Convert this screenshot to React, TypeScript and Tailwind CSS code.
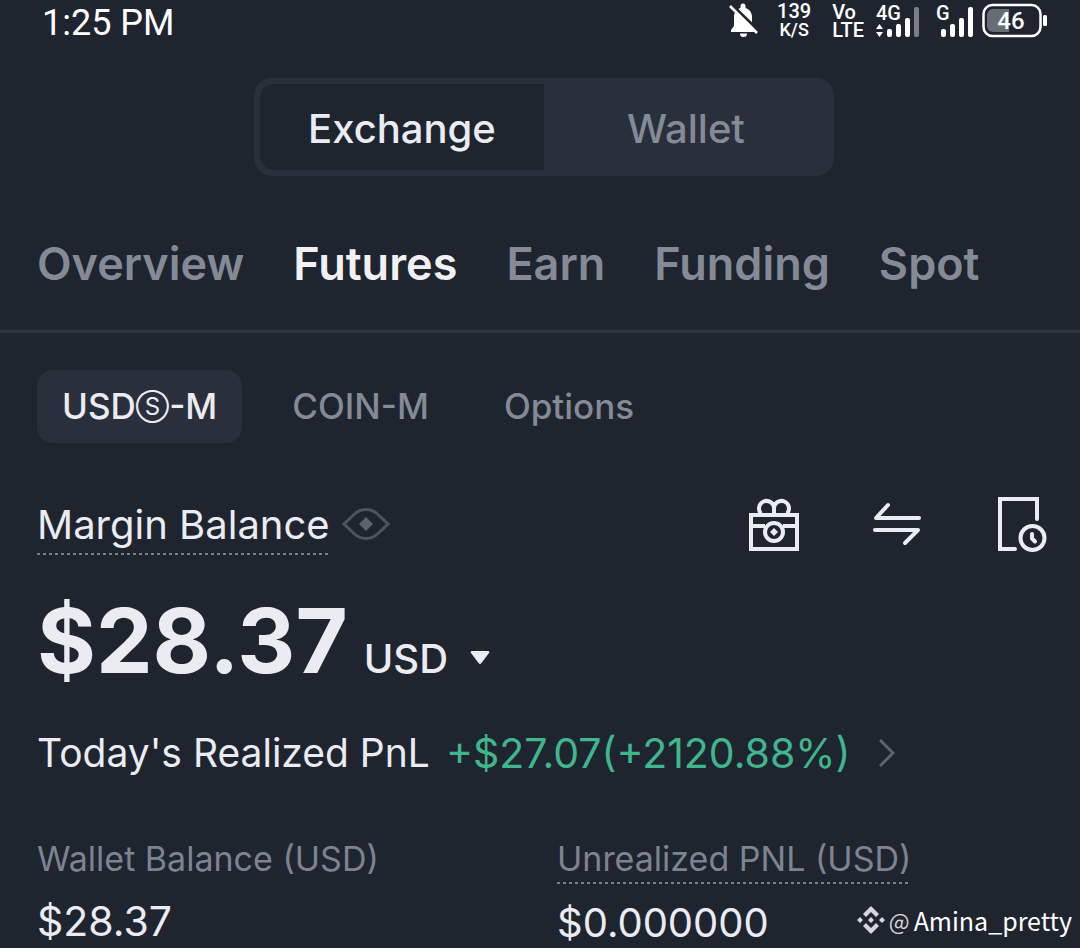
import { useState } from 'react';

const accountTabs = ['Overview', 'Futures', 'Earn', 'Funding', 'Spot'] as const;
const marketTabs = ['USDⓈ-M', 'COIN-M', 'Options'] as const;

const dottedUnderline = 'bg-[linear-gradient(90deg,#7a808b_50%,transparent_50%)] bg-[length:6px_2px] bg-bottom-left bg-repeat-x';

function StatusBar() {
  return (
    <header className="flex h-11 items-start justify-between pr-8 pl-[42px] font-['Roboto',sans-serif] text-white">
      <time className="text-[36px] leading-[46px]">1:25 PM</time>
      <div className="flex items-start font-medium">
        <svg className="mt-[2px] h-9 w-8" viewBox="0 0 32 36" fill="none">
          <path d="M3 30h24v-2l-3-4V15c0-5-3-8-6.500-9V4a2.500 2.500 0 0 0-5 0v2C9 7 6 10 6 15v9l-3 4z" fill="white" />
          <path d="M12 31.500h7a3.500 3.500 0 0 1-7 0z" fill="white" />
          <path d="M3 2l28 27" stroke="#1f252f" strokeWidth="3" />
          <path d="M2 4l27 27" stroke="white" strokeWidth="2.500" />
        </svg>
        <div className="ml-4 w-9 text-center text-[20px] leading-[22px]">
          <div>139</div>
          <div className="text-[18px] leading-4">K/S</div>
        </div>
        <div className="ml-5 pt-[3px] text-[20px] leading-[18px]">
          <div>Vo</div>
          <div>LTE</div>
        </div>
        <svg className="ml-3 h-[38px] w-11" viewBox="0 0 44 38" fill="white">
          <text x="0" y="20" fontSize="20">4G</text>
          <path d="M0 29l3.500-5 3.500 5zM0 32h7l-3.500 5z" />
          <rect x="11" y="29" width="5" height="8" rx="2" />
          <rect x="20" y="24" width="5" height="13" rx="2" />
          <rect x="29" y="18" width="5" height="19" rx="2" />
          <rect x="38" y="7" width="5" height="30" rx="2" fill="#7b7f88" />
        </svg>
        <svg className="ml-4 h-[38px] w-10" viewBox="0 0 40 38" fill="white">
          <text x="0" y="20" fontSize="20">G</text>
          <rect x="5" y="29" width="5" height="8" rx="2" />
          <rect x="14" y="24" width="5" height="13" rx="2" />
          <rect x="23" y="18" width="5" height="19" rx="2" />
          <rect x="32" y="7" width="5" height="30" rx="2" />
        </svg>
        <svg className="ml-[6px] h-[38px] w-[66px]" viewBox="0 0 66 38" fill="none">
          <rect x="1.500" y="5" width="57" height="31" rx="9" stroke="white" strokeWidth="2.500" />
          <path d="M11 9h16v23H11a6 6 0 0 1-6-6V15a6 6 0 0 1 6-6z" fill="#676d77" />
          <rect x="61" y="15" width="4" height="11" rx="1.500" fill="white" />
          <text x="29" y="29" fontSize="24" fill="white" textAnchor="middle">46</text>
        </svg>
      </div>
    </header>
  );
}

function EyeIcon() {
  return (
    <svg className="h-8 w-12" viewBox="0 0 48 32" fill="none">
      <path d="M2 16L12 6.500C15.500 3 19.500 1.500 24 1.500S32.500 3 36 6.500L46 16 36 25.500C32.500 29 28.500 30.500 24 30.500S15.500 29 12 25.500z" stroke="#4d545f" strokeWidth="3" />
      <path d="M24 9l7 7-7 7-7-7z" fill="#5b626d" />
    </svg>
  );
}

function GiftIcon() {
  return (
    <svg className="h-14 w-14" viewBox="0 0 56 56" fill="none" stroke="#eaecf2" strokeWidth="4">
      <path d="M4 18h46v34H4zM4 29h14M36 29h14" />
      <path d="M27 18V11a7.500 7.500 0 1 0-13 5.500M27 18V11a7.500 7.500 0 1 1 13 5.500" />
      <circle cx="27" cy="35" r="9" />
      <path d="M27 31l4 4-4 4-4-4z" fill="#eaecf2" stroke="none" />
    </svg>
  );
}

function TransferIcon() {
  return (
    <svg className="h-14 w-14" viewBox="0 0 56 56" fill="none" stroke="#eaecf2" strokeWidth="4" strokeLinecap="round" strokeLinejoin="round">
      <path d="M48 21H5L17 8" />
      <path d="M4 33h43L34 46" />
    </svg>
  );
}

function HistoryIcon() {
  return (
    <svg className="h-14 w-14" viewBox="0 0 56 56" fill="none" stroke="#eaecf2" strokeWidth="4" strokeLinecap="round">
      <path d="M20 52H5V2h37V22" />
      <circle cx="37.500" cy="41" r="12" />
      <path d="M37 37v4.500l3 3" strokeLinejoin="round" />
    </svg>
  );
}

function BinanceLogo() {
  return (
    <svg className="h-7 w-7" viewBox="0 0 28 28" fill="#d5d7dc">
      <path d="M14 0l8 8-3 3-5-5-5 5-3-3zM14 28l8-8-3-3-5 5-5-5-3 3zM3 11l3 3-3 3-3-3zM25 11l3 3-3 3-3-3zM14 11l3 3-3 3-3-3z" />
    </svg>
  );
}

export default function App() {
  const [view, setView] = useState('Exchange');
  const [account, setAccount] = useState<string>('Futures');
  const [market, setMarket] = useState<string>('USDⓈ-M');

  return (
    <div className="relative min-h-screen overflow-hidden bg-[#1f252f] font-['Inter','Noto_Sans_CJK_SC',sans-serif] text-[#eaecf2]">
      <StatusBar />

      <div className="mt-[34px] flex justify-center pl-2">
        <div className="flex h-[98px] w-[580px] max-w-full rounded-[18px] bg-[#2a303b] p-[6px] text-[40px] font-medium">
          {['Exchange', 'Wallet'].map((item) => (
            <button
              key={item}
              onClick={() => setView(item)}
              className={`flex-1 pt-1 first:rounded-l-[14px] last:rounded-r-[14px] ${view === item ? 'bg-[#1f252f]' : 'text-[#848a96]'}`}
            >
              {item}
            </button>
          ))}
        </div>
      </div>

      <nav className="mt-[58px] flex gap-[49px] border-b-[3px] border-[#2f3541] px-[37px] pb-9 text-[45px] leading-[60px] font-semibold">
        {accountTabs.map((item) => (
          <button key={item} onClick={() => setAccount(item)} className={account === item ? 'text-[#f0f1f5]' : 'text-[#848a96]'}>
            {item}
          </button>
        ))}
      </nav>

      <main className="px-[37px]">
        <div className="mt-[37px] flex gap-[25px] text-[35px] font-medium">
          {marketTabs.map((item) => (
            <button
              key={item}
              onClick={() => setMarket(item)}
              className={`flex h-[73px] items-center rounded-[16px] px-[25px] ${market === item ? 'bg-[#2a303b]' : 'text-[#848a96]'}`}
            >
              {item.split('Ⓢ').map((part, i) => (
                <span key={part} className="flex items-center">
                  {i > 0 && <span className="text-[24px] leading-none font-normal">Ⓢ</span>}
                  {part}
                </span>
              ))}
            </button>
          ))}
        </div>

        <div className="mt-[52px] flex items-start justify-between">
          <div className="flex items-start gap-3">
            <h1 className={`pt-[6px] pb-[6px] text-[40px] leading-[48px] ${dottedUnderline}`}>Margin Balance</h1>
            <button aria-label="Hide balance" className="mt-[13px]">
              <EyeIcon />
            </button>
          </div>
          <div className="-mr-2 flex gap-[68px] pt-[2px]">
            <button aria-label="Rewards"><GiftIcon /></button>
            <button aria-label="Transfer"><TransferIcon /></button>
            <button aria-label="History"><HistoryIcon /></button>
          </div>
        </div>

        <div className="mt-7 flex items-baseline">
          <strong className="text-[90px] leading-[116px] font-bold">$28.37</strong>
          <button className="ml-4 flex items-center gap-[22px] text-[40px] font-medium">
            USD
            <svg className="h-4 w-5" viewBox="0 0 20 16" fill="currentColor">
              <path d="M2 0h16q2 0 1 2l-7.500 10q-1.500 2-3 0L1 2q-1-2 1-2z" />
            </svg>
          </button>
        </div>

        <a href="#pnl" className="mt-6 flex items-center text-[39px] leading-[60px]">
          <span>Today's Realized PnL</span>
          <span className="ml-4 text-[41px] text-[#3fb68b]">+$27.07(+2120.88%)</span>
          <svg className="ml-7 h-7 w-4" viewBox="0 0 16 28" fill="none" stroke="#5d6470" strokeWidth="3">
            <path d="M1 1l13 13L1 27" />
          </svg>
        </a>

        <dl className="mt-[53px] grid grid-cols-2 gap-[34px]">
          <div>
            <dt className="text-[34px] leading-[46px] text-[#7d838f]">Wallet Balance (USD)</dt>
            <dd className="mt-3 text-[41px] leading-[54px]">$28.37</dd>
          </div>
          <div>
            <dt className="text-[34px] leading-[46px] text-[#7d838f]">
              <span className={`inline-block pb-[2px] ${dottedUnderline}`}>Unrealized PNL (USD)</span>
            </dt>
            <dd className="mt-3 text-[40px] leading-[54px]">$0.000000</dd>
          </div>
        </dl>
      </main>

      <div className="absolute right-2 bottom-4 flex items-center gap-1 font-['Noto_Sans_CJK_SC',sans-serif] text-[25px] leading-6 text-white">
        <BinanceLogo />
        <span className="text-[22px] text-[#d5d7dc]">@</span>
        <span>Amina_pretty</span>
      </div>
    </div>
  );
}
